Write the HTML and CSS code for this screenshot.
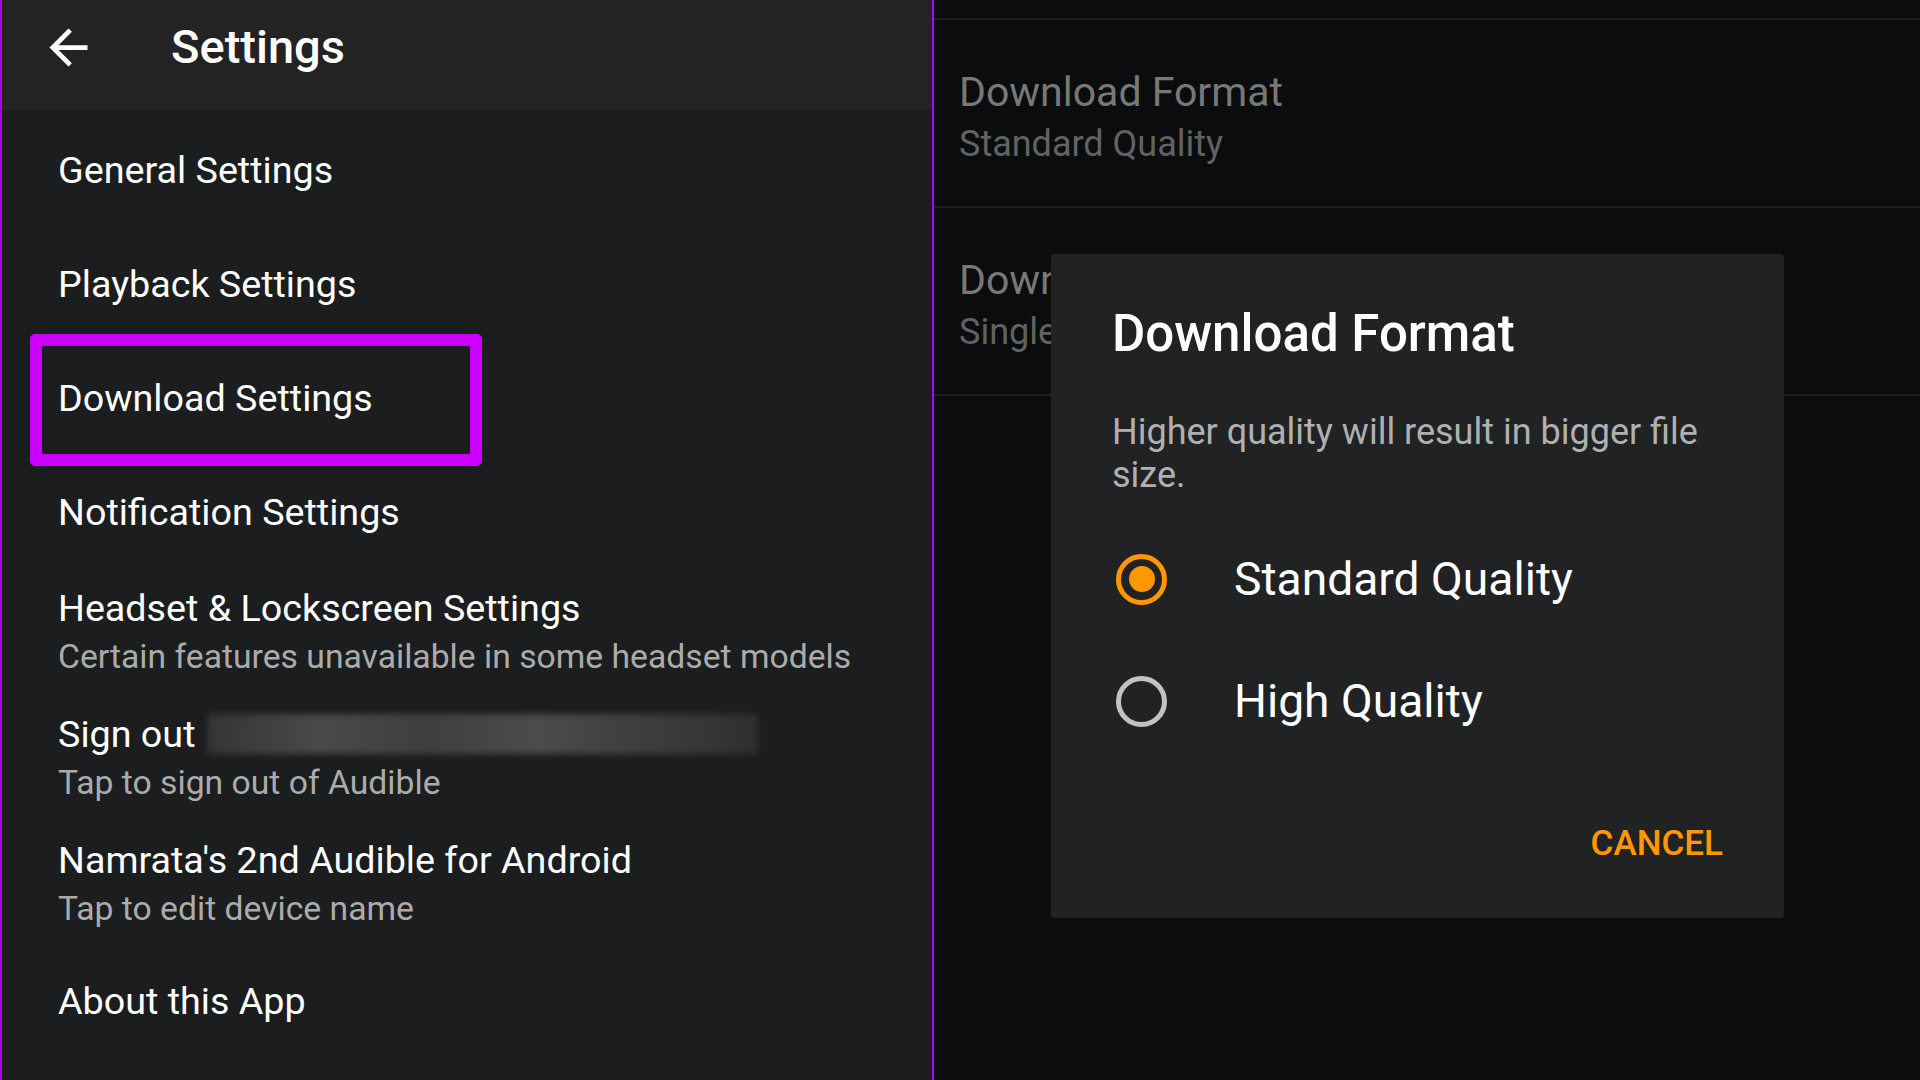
FILE: index.html
```html
<!DOCTYPE html>
<html lang="en">
<head>
<meta charset="utf-8">
<title>Settings</title>
<link rel="stylesheet" href="styles.css">
</head>
<body>
<div class="screen">
  <section class="left">
    <header class="appbar">
      <svg class="back" viewBox="0 0 24 24" width="57" height="57" aria-hidden="true">
        <path d="M20 11H7.83l5.59-5.59L12 4l-8 8 8 8 1.41-1.41L7.83 13H20v-2z" fill="#ffffff"/>
      </svg>
      <h1 class="title">Settings</h1>
    </header>
    <ul class="list">
      <li class="item single"><span class="primary">General Settings</span></li>
      <li class="item single"><span class="primary">Playback Settings</span></li>
      <li class="item single highlighted"><span class="primary">Download Settings</span><span class="highlight-box"></span></li>
      <li class="item single"><span class="primary">Notification Settings</span></li>
      <li class="item double">
        <span class="primary">Headset &amp; Lockscreen Settings</span>
        <span class="secondary">Certain features unavailable in some headset models</span>
      </li>
      <li class="item double">
        <span class="primary">Sign out <span class="redacted"></span></span>
        <span class="secondary">Tap to sign out of Audible</span>
      </li>
      <li class="item double">
        <span class="primary">Namrata's 2nd Audible for Android</span>
        <span class="secondary">Tap to edit device name</span>
      </li>
      <li class="item single last"><span class="primary">About this App</span></li>
    </ul>
  </section>
  <section class="right">
    <div class="right-top"></div>
    <div class="pref">
      <span class="pref-title">Download Format</span>
      <span class="pref-sub">Standard Quality</span>
    </div>
    <div class="pref covered">
      <span class="pref-title">Download Parts</span>
      <span class="pref-sub">Single Part</span>
    </div>
    <div class="dialog">
      <h2 class="dialog-title">Download Format</h2>
      <p class="dialog-body">Higher quality will result in bigger file size.</p>
      <div class="options">
        <div class="option"><span class="radio checked"></span><span class="opt-label">Standard Quality</span></div>
        <div class="option"><span class="radio"></span><span class="opt-label">High Quality</span></div>
      </div>
      <div class="actions"><span class="btn">CANCEL</span></div>
    </div>
  </section>
</div>
</body>
</html>
```
FILE: styles.css
```css
* { box-sizing: border-box; }
html, body { margin: 0; padding: 0; }
body {
  width: 1920px;
  height: 1080px;
  overflow: hidden;
  background: #0b0c0e;
  font-family: Roboto, "Noto Sans", "Liberation Sans", sans-serif;
}
.screen {
  display: flex;
  width: 1920px;
  height: 1080px;
}
.left {
  width: 934px;
  flex: none;
  background: #1b1d1e;
  border-left: 2px solid #b000e0;
  border-right: 2px solid #b800e8;
  display: flex;
  flex-direction: column;
}
.appbar {
  height: 110px;
  background: #232323;
  display: flex;
  align-items: center;
  padding: 0 0 16px 38px;
  flex: none;
}
.back { display: block; flex: none; }
.title {
  margin: 0 0 0 74px;
  color: #ffffff;
  font-size: 47px;
  font-weight: 500;
  line-height: 60px;
}
.list {
  list-style: none;
  margin: 0;
  padding: 3px 0 0 0;
}
.item {
  display: flex;
  flex-direction: column;
  justify-content: center;
  padding-left: 56px;
  position: relative;
}
.item.single { height: 114px; }
.item.double { height: 126px; }
.item.last { height: 108px; }
.primary {
  color: #ffffff;
  font-size: 37.7px;
  line-height: 50px;
  white-space: nowrap;
  display: flex;
  align-items: center;
}
.secondary {
  color: #ababab;
  font-size: 33.7px;
  line-height: 48px;
  white-space: nowrap;
}
.highlight-box {
  position: absolute;
  left: 28px;
  top: -7px;
  width: 452px;
  height: 132px;
  border: 12px solid #cc00ff;
  border-radius: 5px;
}
.redacted {
  display: inline-block;
  width: 551px;
  height: 40px;
  margin-left: 12px;
  background: linear-gradient(90deg, #333436 0%, #48494b 20%, #3e3f41 40%, #4a4b4d 60%, #3c3d3f 80%, #2e2f31 100%);
  filter: blur(3px);
}
.right {
  flex: 1;
  position: relative;
  background: #0b0c0e;
}
.right-top {
  height: 20px;
  border-bottom: 2px solid #1c1d1f;
}
.pref {
  height: 188px;
  border-bottom: 2px solid #1c1d1f;
  padding: 46px 0 0 25px;
  display: flex;
  flex-direction: column;
}
.pref.covered .pref-title,
.pref.covered .pref-sub {
  width: 92px;
  overflow: hidden;
}
.pref-title {
  color: #787878;
  font-size: 41px;
  line-height: 52px;
  white-space: nowrap;
}
.pref-sub {
  color: #626262;
  font-size: 36px;
  line-height: 52px;
  white-space: nowrap;
}
.dialog {
  position: absolute;
  left: 117px;
  top: 254px;
  width: 733px;
  height: 664px;
  background: #212224;
  border-radius: 3px;
  padding: 50px 61px 54px 61px;
  display: flex;
  flex-direction: column;
}
.dialog-title {
  margin: 0;
  color: #ffffff;
  font-size: 51px;
  font-weight: 500;
  line-height: 60px;
}
.dialog-body {
  margin: 47px 0 0 0;
  color: #b0b0b0;
  font-size: 36px;
  line-height: 43px;
}
.options {
  margin-top: 21px;
  display: flex;
  flex-direction: column;
}
.option {
  height: 122px;
  display: flex;
  align-items: center;
}
.radio {
  width: 51px;
  height: 51px;
  margin-left: 4px;
  border: 5px solid #c2c2c2;
  border-radius: 50%;
  flex: none;
  display: flex;
  align-items: center;
  justify-content: center;
}
.radio.checked { border-color: #ff9800; }
.radio.checked::after {
  content: "";
  width: 26px;
  height: 26px;
  border-radius: 50%;
  background: #ff9800;
}
.opt-label {
  margin-left: 67px;
  color: #ffffff;
  font-size: 46.2px;
  line-height: 56px;
  white-space: nowrap;
}
.actions {
  margin-top: auto;
  display: flex;
  justify-content: flex-end;
}
.btn {
  color: #ff9800;
  font-size: 35px;
  font-weight: 500;
  line-height: 40px;
}
```
